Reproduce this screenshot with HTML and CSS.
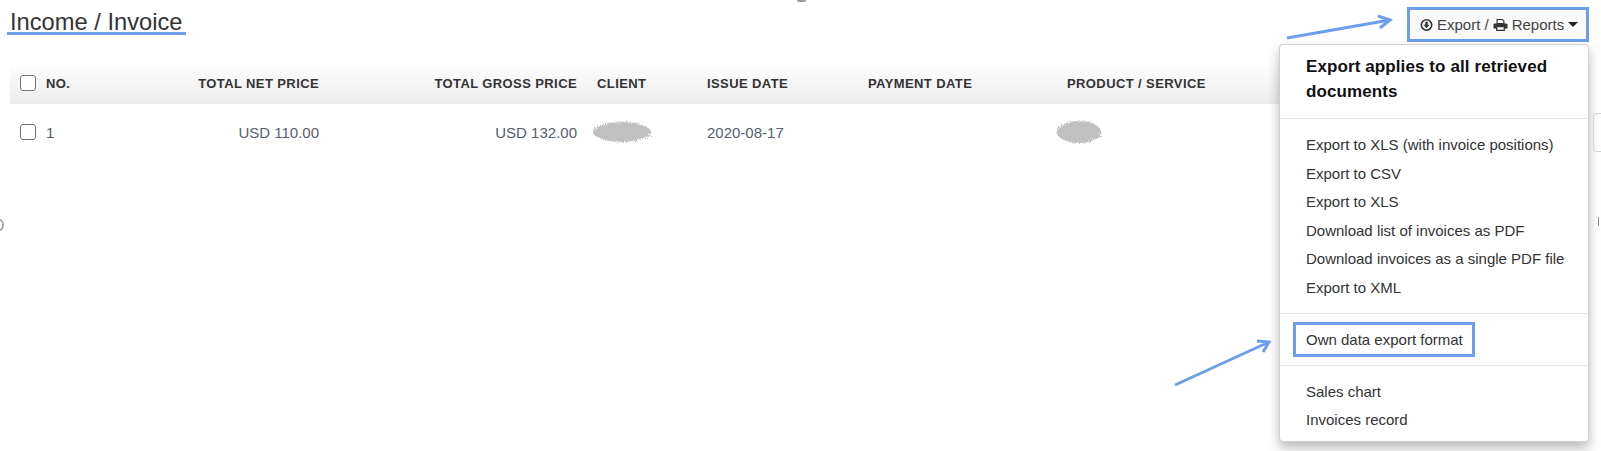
FILE: index.html
```html
<!DOCTYPE html>
<html lang="en">
<head>
    <meta charset="UTF-8">
    <title>Income / Invoice</title>
    <link rel="stylesheet" href="styles.css">
</head>
<body>
    <svg class="defs" width="0" height="0" aria-hidden="true">
        <filter id="rough" x="-10%" y="-20%" width="120%" height="140%">
            <feTurbulence type="fractalNoise" baseFrequency="0.9" numOctaves="2" seed="4"/>
            <feDisplacementMap in="SourceGraphic" scale="6"/>
        </filter>
    </svg>

    <div class="page">
        <div class="top-bar">
            <h1 class="page-title"><span class="mark-line">Income / Invoice</span></h1>
            <button class="export-button">
                <svg class="icon" viewBox="0 0 14 14">
                    <circle cx="7" cy="7" r="5.6" fill="none" stroke="currentColor" stroke-width="1.7"/>
                    <path d="M5.7 3.6h2.600v3.200h1.900L7 10.400 3.800 6.800h1.900z" fill="currentColor"/>
                </svg>
                Export /
                <svg class="icon icon-print" viewBox="0 0 15 14">
                    <path d="M3.500 1h6l2 2v3h-8z M4.600 2.100v3h5.800V3.600L9 2.100z" fill="currentColor" fill-rule="evenodd"/>
                    <path d="M1.800 5.600h11.400c.7 0 1.300.6 1.300 1.300v3.600h-2.600v2.400H3.100v-2.400H.5V6.900c0-.7.6-1.300 1.300-1.300zM4.300 9.300v2.500h6.400V9.300z" fill="currentColor" fill-rule="evenodd"/>
                </svg>
                Reports
                <span class="caret"></span>
            </button>
        </div>

        <div class="invoice-table">
            <div class="table-row table-head">
                <div class="cell-no"><span class="check"></span>NO.</div>
                <div class="cell-right">TOTAL NET PRICE</div>
                <div class="cell-right">TOTAL GROSS PRICE</div>
                <div class="cell-client">CLIENT</div>
                <div>ISSUE DATE</div>
                <div>PAYMENT DATE</div>
                <div>PRODUCT / SERVICE</div>
            </div>
            <div class="table-row table-body">
                <div class="cell-no"><span class="check"></span>1</div>
                <div class="cell-right">USD 110.00</div>
                <div class="cell-right">USD 132.00</div>
                <div class="cell-client"><span class="redacted redacted-client"></span></div>
                <div>2020-08-17</div>
                <div></div>
                <div><span class="redacted redacted-product"></span></div>
            </div>
        </div>
    </div>

    <!-- Export menu -->
    <div class="export-menu">
        <div class="menu-title">Export applies to all retrieved documents</div>
        <div class="menu-group">
            <a class="menu-item">Export to XLS (with invoice positions)</a>
            <a class="menu-item">Export to CSV</a>
            <a class="menu-item">Export to XLS</a>
            <a class="menu-item">Download list of invoices as PDF</a>
            <a class="menu-item">Download invoices as a single PDF file</a>
            <a class="menu-item">Export to XML</a>
        </div>
        <div class="menu-group">
            <a class="menu-item menu-item-marked">Own data export format</a>
        </div>
        <div class="menu-group">
            <a class="menu-item">Sales chart</a>
            <a class="menu-item">Invoices record</a>
        </div>
    </div>

    <!-- Annotation arrows -->
    <svg class="arrow arrow-top" width="120" height="40" viewBox="0 0 120 40">
        <path d="M1 38 L104 20 M92 16 L104 20 L94 28" fill="none" stroke="#6d9eeb" stroke-width="3"/>
    </svg>
    <svg class="arrow arrow-bottom" width="110" height="60" viewBox="0 0 110 60">
        <path d="M3 55 L97 12 M85 11 L97 12 L91 22" fill="none" stroke="#6d9eeb" stroke-width="3"/>
    </svg>

    <!-- Bits cut off at the edge of the shot -->
    <span class="side-button"></span>
    <span class="edge-bit edge-bit-top"></span>
    <span class="edge-bit edge-bit-left"></span>
    <span class="edge-bit edge-bit-right"></span>
</body>
</html>
```

FILE: styles.css
```css
body {
    margin: 0;
    font-family: "Liberation Sans", Arial, sans-serif;
    font-size: 15px;
    color: #56606e;
    background-color: #fff;
    height: 451px;
    overflow: hidden;
}

.defs {
    position: absolute;
}

.page {
    padding: 7px 12px 0 10px;
}

.top-bar {
    display: flex;
    justify-content: space-between;
    align-items: flex-start;
    height: 55px;
}

.page-title {
    margin: 2px 0 0;
    font-size: 23.7px;
    font-weight: normal;
    line-height: 27px;
    color: #333;
}

.mark-line {
    display: inline-block;
    margin-left: -3px;
    padding: 0 4px 0 3px;
    height: 23px;
    border-bottom: 3px solid #6d9eeb;
}

.export-button {
    display: flex;
    align-items: center;
    gap: 4px;
    box-sizing: border-box;
    width: 182px;
    height: 35px;
    padding: 0 0 0 10px;
    font: inherit;
    color: #444;
    background: #f9f9f9;
    border: 3px solid #6d9eeb;
}

.icon {
    width: 13px;
    height: 14px;
    color: #333;
}

.icon-print {
    width: 15px;
}

.caret {
    margin-left: 0;
    border-top: 5px solid #222;
    border-left: 5px solid transparent;
    border-right: 5px solid transparent;
}

.invoice-table {
    width: 1579px;
}

.table-row {
    display: grid;
    grid-template-columns: 201px 108px 258px 130px 161px 199px 1fr;
    align-items: center;
}

.table-head {
    height: 42px;
    font-size: 13px;
    font-weight: bold;
    letter-spacing: 0.4px;
    color: #333;
    background: linear-gradient(to bottom, #fff, #ececec);
}

.table-body {
    height: 56px;
}

.cell-no {
    display: flex;
    align-items: center;
    gap: 10px;
    padding-left: 10px;
}

.cell-right {
    text-align: right;
    white-space: nowrap;
    justify-self: end;
}

.cell-client {
    padding-left: 20px;
}

.check {
    width: 14px;
    height: 14px;
    background: #fff;
    border: 1px solid #767676;
    border-radius: 3px;
}

.redacted {
    display: block;
    background: #c0c0c0;
    border-radius: 50%;
    filter: url(#rough);
}

.redacted-client {
    width: 58px;
    height: 20px;
    margin-left: -4px;
}

.redacted-product {
    width: 44px;
    height: 22px;
    margin-left: -10px;
}

.export-menu {
    position: absolute;
    top: 44px;
    left: 1279px;
    box-sizing: border-box;
    width: 310px;
    height: 398px;
    background: #fff;
    border: 1px solid #cfcfcf;
    border-radius: 4px;
    box-shadow: 0 6px 12px rgba(0, 0, 0, 0.28);
}

.menu-title {
    padding: 9px 26px 14px;
    font-size: 17px;
    font-weight: bold;
    letter-spacing: 0.1px;
    line-height: 25px;
    color: #111;
    border-bottom: 1px solid #e5e5e5;
}

.menu-group {
    display: flex;
    flex-direction: column;
    padding: 12px 0 10.5px;
    border-bottom: 1px solid #e5e5e5;
}

.menu-group:last-child {
    border-bottom: none;
}

.menu-item {
    padding-left: 26px;
    line-height: 28.5px;
    color: #333;
}

.menu-item-marked {
    position: relative;
}

.menu-item-marked::after {
    content: "";
    position: absolute;
    top: -4px;
    left: 13px;
    box-sizing: border-box;
    width: 182px;
    height: 35px;
    border: 3px solid #6d9eeb;
}

.arrow {
    position: absolute;
}

.arrow-top {
    top: 0;
    left: 1286px;
}

.arrow-bottom {
    top: 330px;
    left: 1172px;
}

.side-button {
    position: absolute;
    top: 113px;
    left: 1593px;
    width: 12px;
    height: 37px;
    border: 1px solid #ccd6e0;
    border-radius: 4px;
}

.edge-bit {
    position: absolute;
    background: #999;
}

.edge-bit-top {
    top: 0;
    left: 797px;
    width: 9px;
    height: 2px;
    border-radius: 0 0 4px 4px;
}

.edge-bit-left {
    top: 219px;
    left: -4px;
    width: 4px;
    height: 8px;
    background: none;
    border: 2px solid #aaa;
    border-radius: 50%;
}

.edge-bit-right {
    top: 217px;
    left: 1598px;
    width: 1px;
    height: 9px;
    background: #888;
}
```
